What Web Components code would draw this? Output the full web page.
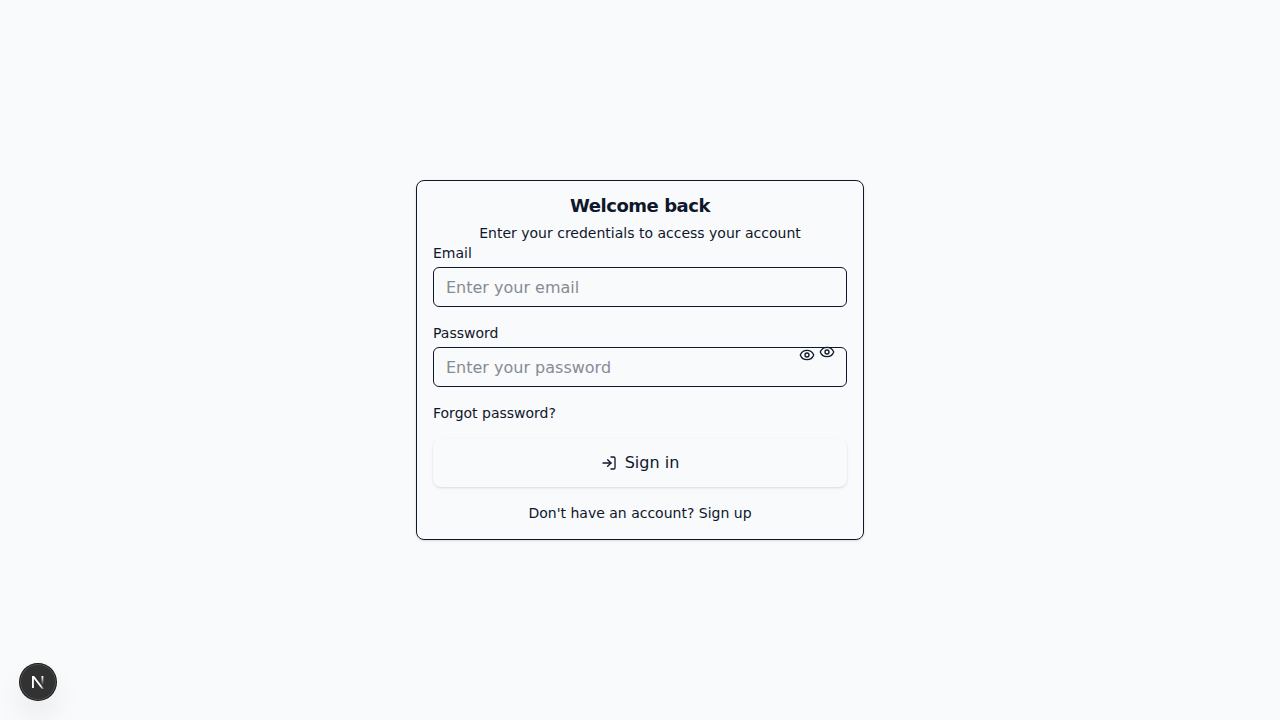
<!DOCTYPE html>
<html lang="en">
<head>
<meta charset="utf-8">
<meta name="viewport" content="width=device-width, initial-scale=1">
<title>Sign in</title>
<style>
  body {
    margin: 0;
    --ink: #0f172a;
    --surface: #f8fafc;
    background: var(--surface);
    color: var(--ink);
    font: 14px/20px "DejaVu Sans", sans-serif;
  }
</style>
</head>
<body>
<sign-in-page></sign-in-page>
<dev-badge></dev-badge>

<script>
const define = (name, html, setup) => {
  const template = document.createElement('template');
  template.innerHTML = html;
  customElements.define(name, class extends HTMLElement {
    constructor() {
      super();
      this.attachShadow({ mode: 'open' }).append(template.content.cloneNode(true));
    }
    connectedCallback() {
      if (setup) setup(this, this.shadowRoot);
    }
  });
};

const svgStyle = `
  :host { display: block; width: 16px; height: 16px; }
  svg { display: block; width: 16px; height: 16px; fill: none; stroke: currentColor;
        stroke-width: 2; stroke-linecap: round; stroke-linejoin: round; }`;

define('eye-icon', `
  <style>${svgStyle}</style>
  <svg viewBox="0 0 24 24" aria-hidden="true">
    <path d="M2.062 12.348a1 1 0 0 1 0-.696 10.75 10.75 0 0 1 19.876 0 1 1 0 0 1 0 .696 10.75 10.75 0 0 1-19.876 0"/>
    <circle cx="12" cy="12" r="3"/>
  </svg>`);

define('login-icon', `
  <style>${svgStyle}</style>
  <svg viewBox="0 0 24 24" aria-hidden="true">
    <path d="M15 3h4a2 2 0 0 1 2 2v14a2 2 0 0 1-2 2h-4"/>
    <path d="M10 17l5-5-5-5"/>
    <path d="M15 12H3"/>
  </svg>`);

define('text-field', `
  <style>
    :host { display: block; position: relative; }
    label { display: block; margin-bottom: 4px; }
    input {
      display: block; box-sizing: border-box; width: 100%; height: 40px;
      margin: 0; padding: 8px 12px;
      border: 1px solid var(--ink); border-radius: 6px;
      background: var(--surface); color: inherit;
      font: inherit; font-size: 16px; line-height: 24px;
    }
    input::placeholder { color: #878b95; opacity: 1; }
  </style>
  <label for="control"></label>
  <input id="control">
  <slot></slot>`,
  (host, root) => {
    root.querySelector('label').textContent = host.getAttribute('label');
    const input = root.querySelector('input');
    input.type = host.getAttribute('type') || 'text';
    input.placeholder = host.getAttribute('placeholder') || '';
  });

define('auth-card', `
  <style>
    :host {
      display: flex; flex-direction: column; box-sizing: border-box;
      width: 100%; max-width: 448px; padding: 16px;
      border: 1px solid var(--ink); border-radius: 8px;
      box-shadow: 0 1px 3px rgb(0 0 0 / .1), 0 1px 2px -1px rgb(0 0 0 / .1);
    }
    header { text-align: center; }
    h1 { margin: 0 0 8px; font-size: 18px; line-height: 18px; font-weight: 700; letter-spacing: -0.025em; }
    p { margin: 0; }
  </style>
  <header>
    <h1><slot name="title"></slot></h1>
    <p><slot name="description"></slot></p>
  </header>
  <slot></slot>`);

define('sign-in-page', `
  <style>
    :host { display: flex; align-items: center; justify-content: center; min-height: 100vh; }
    form { display: flex; flex-direction: column; gap: 16px; }
    a { color: inherit; text-decoration: none; }
    p { margin: 0; text-align: center; }
    button { margin: 0; padding: 0; border: 0; background: none; color: inherit; font: inherit; cursor: pointer; }
    .submit {
      display: flex; align-items: center; justify-content: center; gap: 8px;
      height: 48px; border-radius: 8px; font-size: 16px; line-height: 24px;
      box-shadow: 0 1px 3px rgb(0 0 0 / .1), 0 1px 2px -1px rgb(0 0 0 / .1);
      background: var(--surface);
    }
    .reveal { position: absolute; top: 24px; right: 32px; }
    .hint { position: absolute; top: 21px; right: 12px; }
  </style>
  <auth-card>
    <span slot="title">Welcome back</span>
    <span slot="description">Enter your credentials to access your account</span>
    <form>
      <text-field label="Email" type="email" placeholder="Enter your email"></text-field>
      <text-field label="Password" type="password" placeholder="Enter your password">
        <button class="reveal" type="button" aria-label="Show password"><eye-icon></eye-icon></button>
        <eye-icon class="hint"></eye-icon>
      </text-field>
      <div><a href="#forgot">Forgot password?</a></div>
      <button class="submit" type="submit"><login-icon></login-icon>Sign in</button>
      <p>Don't have an account? <a href="#signup">Sign up</a></p>
    </form>
  </auth-card>`);

define('dev-badge', `
  <style>
    :host { display: block; position: fixed; left: 20px; bottom: 20px; }
    button {
      display: block; width: 36px; height: 36px; padding: 0; border: 0; border-radius: 50%;
      background: #323232;
      box-shadow: 0 0 0 1px #171717, inset 0 0 0 1px rgb(255 255 255 / .14), 0 16px 32px -8px rgb(0 0 0 / .24);
    }
    svg { display: block; width: 36px; height: 36px; }
  </style>
  <button type="button" aria-label="Open developer tools">
    <svg viewBox="0 0 36 36" fill="none" aria-hidden="true">
      <defs>
        <linearGradient id="diagonal" gradientUnits="userSpaceOnUse" x1="9.96" y1="11.13" x2="13.2" y2="15.2">
          <stop stop-color="#fff"/><stop offset="1" stop-color="#fff" stop-opacity="0"/>
        </linearGradient>
        <linearGradient id="stem" gradientUnits="userSpaceOnUse" x1="11.8" y1="1.4" x2="11.8" y2="10">
          <stop stop-color="#fff"/><stop offset="1" stop-color="#fff" stop-opacity="0"/>
        </linearGradient>
        <clipPath id="letter"><rect x="1" y="1" width="13" height="13"/></clipPath>
      </defs>
      <g transform="translate(10.6 11)" stroke-width="1.86" clip-path="url(#letter)">
        <path d="M13.3 15.2 2.34 1v12" stroke="url(#diagonal)"/>
        <path d="M11.825 1v12" stroke="url(#stem)"/>
      </g>
    </svg>
  </button>`);
</script>
</body>
</html>
